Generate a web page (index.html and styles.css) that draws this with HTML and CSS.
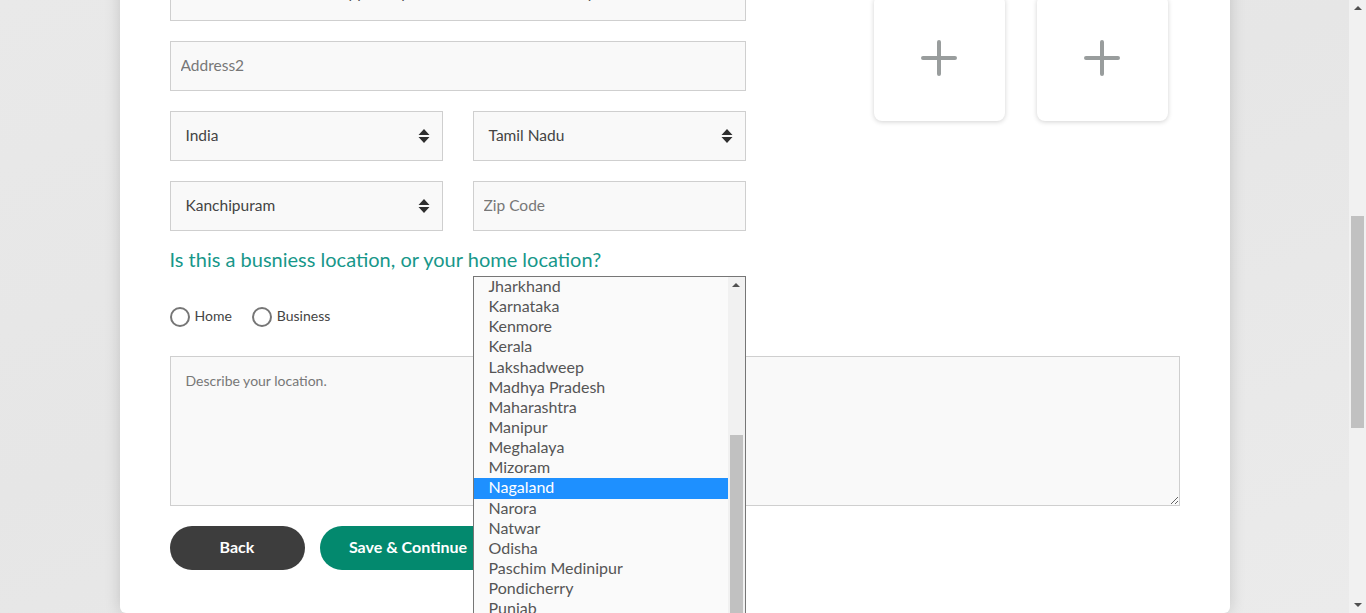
FILE: index.html
```html
<!DOCTYPE html>
<html lang="en">
<head>
<meta charset="utf-8">
<title>Location</title>
<link rel="stylesheet" href="styles.css">
</head>
<body>
<div class="page">
  <main class="viewport">
    <div class="card">
      <div class="top">
        <div class="form-col">
          <input class="field first" type="text" value="1, Gandhi Street Road, Opp. Temple, Near Bus Stand, Kanchipuram, Tamil Nadu, India,">
          <input class="field" type="text" placeholder="Address2">
          <div class="pair">
            <div class="select"><span>India</span><svg class="updown" viewBox="0 0 12 16" width="12" height="16"><path d="M6 1 L11.5 7 H0.5 Z M6 15 L11.5 9 H0.5 Z"/></svg></div>
            <div class="select"><span>Tamil Nadu</span><svg class="updown" viewBox="0 0 12 16" width="12" height="16"><path d="M6 1 L11.5 7 H0.5 Z M6 15 L11.5 9 H0.5 Z"/></svg></div>
          </div>
          <div class="pair">
            <div class="select"><span>Kanchipuram</span><svg class="updown" viewBox="0 0 12 16" width="12" height="16"><path d="M6 1 L11.5 7 H0.5 Z M6 15 L11.5 9 H0.5 Z"/></svg></div>
            <input class="field zip" type="text" placeholder="Zip Code">
          </div>
          <p class="question">Is this a busniess location, or your home location?</p>
          <div class="radios">
            <label class="radio"><span class="circle"></span><span class="label-text">Home</span></label>
            <label class="radio"><span class="circle"></span><span class="label-text">Business</span></label>
          </div>
        </div>
        <div class="photos">
          <div class="photo"><svg viewBox="0 0 36 36" width="36" height="36"><path d="M18 2 V34 M2 18 H34"/></svg></div>
          <div class="photo"><svg viewBox="0 0 36 36" width="36" height="36"><path d="M18 2 V34 M2 18 H34"/></svg></div>
        </div>
      </div>
      <textarea class="describe" placeholder="Describe your location."></textarea>
      <div class="actions">
        <button class="btn back">Back</button>
        <button class="btn save">Save &amp; Continue</button>
      </div>

      <div class="listbox">
        <ul class="options">
          <li>Jharkhand</li>
          <li>Karnataka</li>
          <li>Kenmore</li>
          <li>Kerala</li>
          <li>Lakshadweep</li>
          <li>Madhya Pradesh</li>
          <li>Maharashtra</li>
          <li>Manipur</li>
          <li>Meghalaya</li>
          <li>Mizoram</li>
          <li class="selected">Nagaland</li>
          <li>Narora</li>
          <li>Natwar</li>
          <li>Odisha</li>
          <li>Paschim Medinipur</li>
          <li>Pondicherry</li>
          <li>Punjab</li>
        </ul>
        <div class="list-scroll">
          <span class="arrow-up"></span>
          <span class="list-thumb"></span>
        </div>
      </div>
    </div>
  </main>
  <div class="scrollbar">
    <span class="arrow-up"></span>
    <span class="thumb"></span>
    <span class="arrow-down"></span>
  </div>
</div>
</body>
</html>
```
FILE: styles.css
```css
* { box-sizing: border-box; }
html, body { margin: 0; padding: 0; }
body {
  font-family: Lato, "Open Sans", Arial, sans-serif;
  background: #e9e9e9;
  color: #444;
}
.page {
  display: flex;
  height: 613px;
  overflow: hidden;
}
.viewport {
  flex: 1;
  overflow: hidden;
  background: linear-gradient(160deg, #e9e9e9 0%, #e6e6e6 45%, #ebebeb 100%);
}
.card {
  position: relative;
  width: 1110px;
  height: 642px;
  margin: -29px auto 0;
  background: #fff;
  border-radius: 0 0 6px 6px;
  box-shadow: 0 0 16px rgba(0,0,0,0.16);
  padding: 0 50px;
}
.top {
  display: flex;
}
.form-col {
  width: 576px;
  display: flex;
  flex-direction: column;
  gap: 20px;
}
.field {
  display: block;
  width: 100%;
  height: 50px;
  margin: 0;
  border: 1px solid #cfcfcf;
  background: #f9f9f9;
  padding: 0 10px 3px;
  font-family: inherit;
  font-size: 15.5px;
  color: #555;
  outline: none;
}
.field.first { padding-bottom: 8px; }
.field::placeholder { color: #777; }
.pair {
  display: grid;
  grid-template-columns: 1fr 1fr;
  gap: 30px;
}
.pair > * { min-width: 0; }
.select {
  height: 50px;
  border: 1px solid #cfcfcf;
  background: #f9f9f9;
  display: flex;
  align-items: center;
  justify-content: space-between;
  padding: 0 12px 3px 15px;
  font-size: 15.5px;
  color: #444;
}
.select .updown { margin-top: 3px; }
.updown { fill: #2f2f2f; }
.question {
  margin: -5px 0 0;
  font-size: 20px;
  line-height: 26px;
  color: #17978a;
}
.radios {
  display: flex;
  gap: 20px;
  margin-top: 15px;
  height: 20px;
}
.radio {
  display: flex;
  align-items: center;
  gap: 5px;
  font-size: 14px;
  color: #444;
}
.label-text { margin-top: -3px; }
.circle {
  width: 20px;
  height: 20px;
  border: 2px solid #767676;
  border-radius: 50%;
  background: #fff;
}
.photos {
  display: flex;
  gap: 32px;
  margin-left: 128px;
  padding-top: 24px;
}
.photo {
  width: 131px;
  height: 126px;
  background: #fff;
  border-radius: 8px;
  box-shadow: 0 1px 5px rgba(0,0,0,0.18);
  display: flex;
  align-items: center;
  justify-content: center;
  padding-bottom: 1px;
}
.photo svg {
  stroke: #999d9d;
  stroke-width: 4;
  stroke-linecap: round;
}
.describe {
  display: block;
  width: 100%;
  height: 150px;
  margin: 29px 0 0;
  border: 1px solid #cfcfcf;
  background: #f9f9f9;
  padding: 15px 15px;
  font-family: inherit;
  font-size: 14px;
  resize: both;
  outline: none;
}
.describe::placeholder { color: #777; }
.actions {
  display: flex;
  gap: 15px;
  margin-top: 20px;
}
.btn {
  height: 44px;
  border: none;
  border-radius: 22px;
  color: #fff;
  font-family: inherit;
  font-weight: 700;
  font-size: 16px;
  padding: 0 0 3px;
}
.back { width: 135px; background: #3d3d3d; }
.save { width: 185px; background: #03896e; padding-right: 8px; }

.listbox {
  position: absolute;
  left: 353px;
  top: 305px;
  width: 273px;
  height: 345px;
  border: 1px solid #767676;
  background: #fafafa;
  display: flex;
}
.options {
  list-style: none;
  margin: 0;
  padding: 0;
  flex: 1;
}
.options li {
  height: 20.15px;
  line-height: 18.5px;
  padding-left: 15px;
  font-size: 16px;
  color: #555;
  white-space: nowrap;
}
.options li.selected {
  background: #1e90ff;
  color: #fff;
}
.list-scroll {
  width: 17px;
  background: #f1f1f1;
  display: flex;
  flex-direction: column;
  align-items: center;
}
.arrow-up, .arrow-down {
  width: 0;
  height: 0;
  border-left: 4px solid transparent;
  border-right: 4px solid transparent;
}
.arrow-up { border-bottom: 4px solid #505050; margin-top: 6px; }
.arrow-down { border-top: 4px solid #505050; margin-top: auto; margin-bottom: 6px; }
.list-thumb {
  width: 13px;
  height: 200px;
  margin-top: 148px;
  background: #c1c1c1;
}
.scrollbar {
  width: 17px;
  background: #f1f1f1;
  display: flex;
  flex-direction: column;
  align-items: center;
}
.scrollbar .thumb {
  width: 13px;
  height: 212px;
  margin-top: 206px;
  background: #c1c1c1;
}
```
